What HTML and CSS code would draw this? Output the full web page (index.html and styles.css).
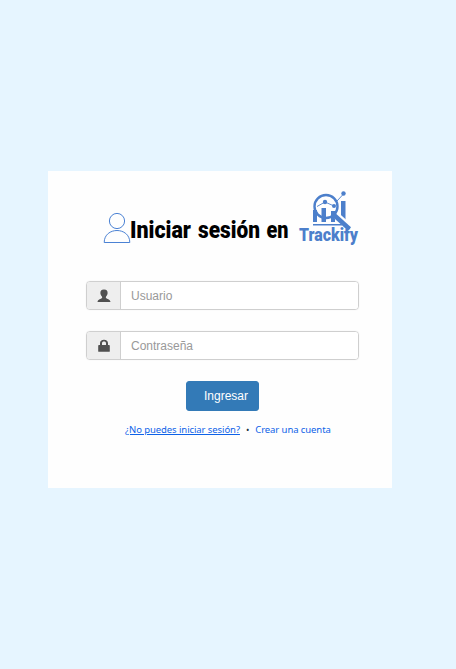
FILE: index.html
```html
<!DOCTYPE html>
<html lang="es">
<head>
<meta charset="utf-8">
<title>Iniciar sesión en Trackify</title>
<link rel="stylesheet" href="styles.css">
</head>
<body>
<main class="card">
  <header class="header">
    <svg class="avatar" viewBox="0 0 28 32" aria-hidden="true">
      <circle cx="14" cy="9" r="7.6"/>
      <path d="M1.2 30.5C1.2 14.5 26.8 14.5 26.8 30.5Z"/>
    </svg>
    <h1 class="title">
      <svg class="title-art" viewBox="0 0 160 32"><text x="0" y="25" textLength="61" lengthAdjust="spacingAndGlyphs">Iniciar</text><text x="68" y="25" textLength="62" lengthAdjust="spacingAndGlyphs">sesión</text><text x="136.500" y="25" textLength="22" lengthAdjust="spacingAndGlyphs">en</text></svg>
    </h1>
    <svg class="logo" viewBox="0 0 64 60" role="img" aria-label="Trackify">
      <path d="M14 21h4v12h-4zM22.500 19h4.500v14h-4.500zM32 22h4v11h-4zM42 12h4.500v20h-4.500z"/>
      <path d="M14 35h29v1.500H14z"/>
      <circle class="logo-lens" cx="27" cy="17.500" r="11.500"/>
      <path class="logo-line" d="M18 17.500L26 13l9 4M38 12l6.500-7"/>
      <circle cx="26" cy="13" r="2.200"/><circle cx="35" cy="17" r="2"/><circle cx="44.500" cy="4.500" r="2.200"/>
      <path class="logo-gap" d="M37.500 26.500L47 35"/>
      <path class="logo-handle" d="M35 26L50.500 40"/>
      <text x="0" y="52" textLength="59" lengthAdjust="spacingAndGlyphs">Trackify</text>
    </svg>
  </header>
  <form class="form">
    <label class="field">
      <span class="addon"><svg viewBox="0 0 14 14" aria-hidden="true"><path d="M7 .5C4.200.5 3.200 2 3.400 4.300c.1 1.500.9 2.600 1.700 3.400v1.400C4.400 10 .8 10.200.5 12.900h13C13.200 10.200 9.600 10 8.900 9.100V7.700C9.700 6.900 10.500 5.800 10.600 4.300 10.800 2 9.800.5 7 .5Z"/></svg></span>
      <input class="input" type="text" placeholder="Usuario">
    </label>
    <label class="field">
      <span class="addon"><svg viewBox="0 0 14 14" aria-hidden="true"><path fill-rule="evenodd" d="M3 6V4.300C3 2 4.500.8 7 .8s4 1.200 4 3.500V6h1q.8 0 .8.8v5.400q0 .6-.8.6H2q-.8 0-.8-.6V6.800Q1.200 6 2 6ZM5 6h4V4.300C9 3.200 8.200 2.600 7 2.600S5 3.200 5 4.300Z"/></svg></span>
      <input class="input" type="text" placeholder="Contraseña">
    </label>
    <button class="submit" type="button">Ingresar</button>
  </form>
  <nav class="links">
    <a class="link underlined" href="#">¿No puedes iniciar sesión?</a>
    <span class="dot">•</span>
    <a class="link" href="#">Crear una cuenta</a>
  </nav>
</main>
</body>
</html>
```

FILE: styles.css
```css
* { box-sizing: border-box; }
body {
  margin: 0;
  min-height: 669px;
  padding: 171px 64px 0 48px;
  background: #e6f5ff;
  font-family: "Liberation Sans", sans-serif;
}
.card {
  width: 344px;
  height: 317px;
  padding: 20px 33px 0 38px;
  background: #fefefe;
}
.header {
  display: flex;
  align-items: flex-start;
  height: 90px;
  padding-left: 17px;
}
.avatar {
  flex: none;
  width: 28px;
  height: 32px;
  margin-top: 21px;
  fill: none;
  stroke: #4b82d4;
  stroke-width: 1;
}
.title { flex: none; margin: 22px 0 0 -1px; line-height: 0; }
.title-art {
  width: 160px;
  height: 32px;
  overflow: visible;
  font: 900 24px Roboto, sans-serif;
}
.logo {
  flex: none;
  width: 64px;
  height: 60px;
  margin: -2px 0 0 9px;
  overflow: visible;
  fill: #4c7fcb;
  font: 900 18px Roboto, sans-serif;
}
.logo-lens { fill: none; stroke: #4c7fcb; stroke-width: 2.4; }
.logo-line { fill: none; stroke: #4c7fcb; stroke-width: .9; }
.logo-gap { stroke: #fefefe; stroke-width: 6.5; }
.logo-handle { fill: none; stroke: #4c7fcb; stroke-width: 4.5; }
.form {
  display: flex;
  flex-direction: column;
  gap: 21px;
  width: 273px;
}
.field {
  display: flex;
  height: 29px;
  border: 1px solid #cfcfcf;
  border-radius: 4px;
  overflow: hidden;
  box-shadow: 0 0 1px #ddd;
}
.addon {
  display: flex;
  align-items: center;
  justify-content: center;
  width: 34px;
  border-right: 1px solid #cfcfcf;
  background: #eee;
}
.addon svg { width: 14px; height: 14px; fill: #505050; }
.input {
  flex: 1;
  min-width: 0;
  padding: 0 10px;
  border: 0;
  outline: 0;
  background: #fff;
  font: 12px "Liberation Sans", sans-serif;
}
.input::placeholder { color: #999; opacity: 1; }
.submit {
  width: 73px;
  height: 30px;
  margin-left: 100px;
  padding: 0 0 0 7px;
  border: 1px solid #337ab7;
  border-radius: 3px;
  background: #337ab7;
  color: #fff;
  font: 12px "Liberation Sans", sans-serif;
}
.links {
  display: flex;
  align-items: center;
  height: 14px;
  margin: 11px 0 0 39px;
  font: 9.5px "Noto Sans", sans-serif;
  letter-spacing: -.08px;
  white-space: nowrap;
}
.link { color: #0d62e8; text-decoration: none; }
.underlined { text-decoration: underline; }
.dot { margin: 0 6px; color: #234; font-size: 9px; }
```
